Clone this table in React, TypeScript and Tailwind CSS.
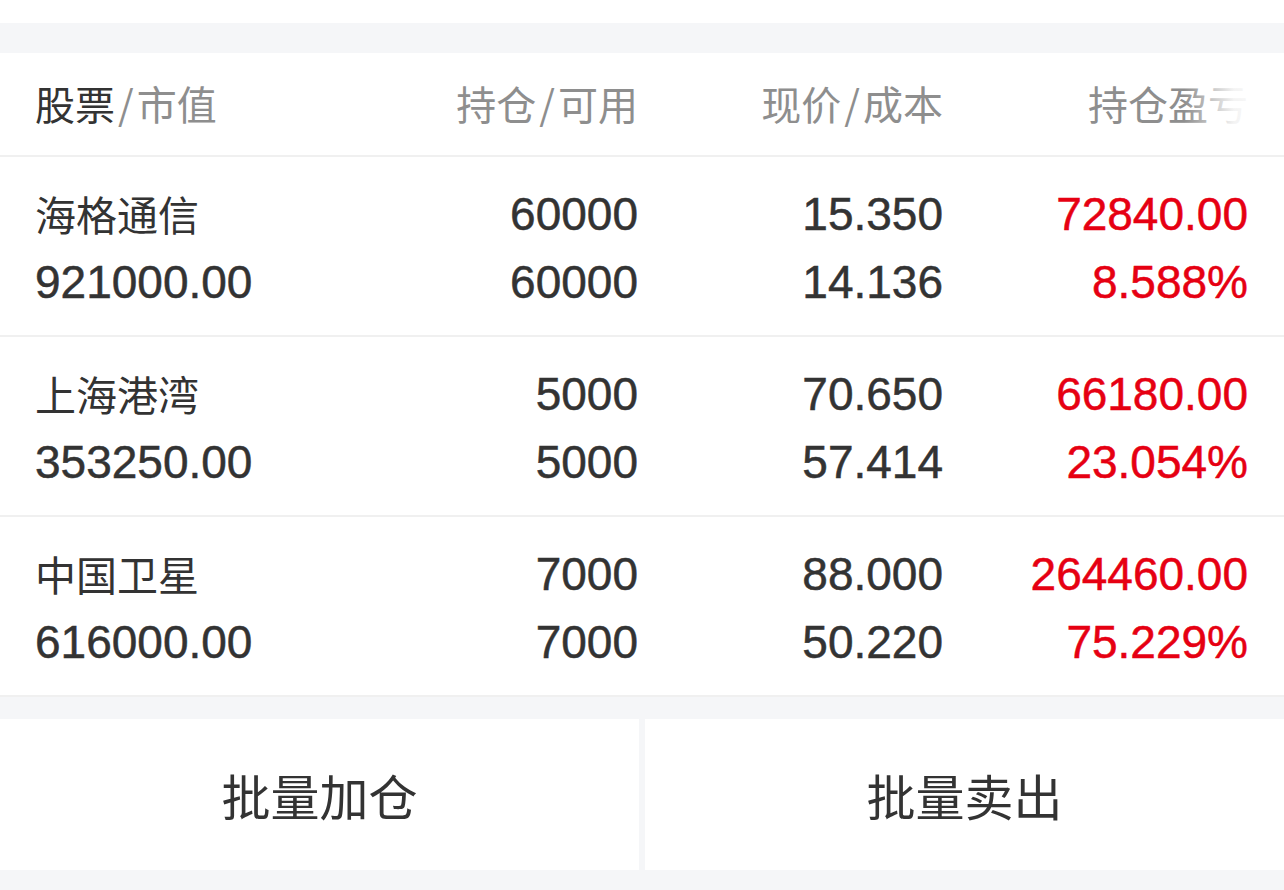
const num = { fontFamily: '"Liberation Sans", Arial, "Noto Sans CJK SC", sans-serif' };
const cjk = { fontFamily: '"Noto Sans CJK SC", "Noto Sans", sans-serif' };

const rows = [
  { name: "海格通信", value: "921000.00", hold: "60000", avail: "60000", price: "15.350", cost: "14.136", pnl: "72840.00", pct: "8.588%" },
  { name: "上海港湾", value: "353250.00", hold: "5000", avail: "5000", price: "70.650", cost: "57.414", pnl: "66180.00", pct: "23.054%" },
  { name: "中国卫星", value: "616000.00", hold: "7000", avail: "7000", price: "88.000", cost: "50.220", pnl: "264460.00", pct: "75.229%" },
];

function HeadCell({ a, b, right }: { a: string; b: string; right?: boolean }) {
  return (
    <div className={right ? "text-right" : "text-left"}>
      <span className={right ? "text-[#8e8e8e]" : "text-[#333333]"}>{a}</span>
      <span className="text-[#8e8e8e] mx-[3px]">/</span>
      <span className="text-[#8e8e8e]">{b}</span>
    </div>
  );
}

export default function App() {
  return (
    <div className="w-[1284px] h-[890px] bg-[#f5f6f8] overflow-hidden" style={cjk}>
      <div className="h-[23px] bg-white" />
      <div className="h-[30px]" />

      {/* table */}
      <div className="bg-white">
        <div className="relative h-[104px] border-b-2 border-[#f0f0f0] grid grid-cols-[1fr_305px_305px_305px] items-center pl-[35px] pr-[36px] pb-[2px] text-[40px] leading-none">
          <HeadCell a="股票" b="市值" />
          <HeadCell a="持仓" b="可用" right />
          <HeadCell a="现价" b="成本" right />
          <div className="text-right text-[#8e8e8e]">持仓盈亏</div>
          <div className="absolute right-0 top-0 h-full w-[100px] bg-gradient-to-r from-white/0 via-white/90 to-white" />
        </div>

        {rows.map((r) => (
          <div
            key={r.name}
            className="h-[180px] border-b-2 border-[#f0f0f0] grid grid-cols-[1fr_305px_305px_305px] pl-[35px] pr-[36px] pt-[23px] text-[#333333]"
          >
            <div className="flex flex-col">
              <div className="h-[68px] flex items-center text-[41px]" style={cjk}>{r.name}</div>
              <div className="h-[68px] flex items-center text-[46px] [-webkit-text-stroke:0.5px_currentColor]" style={num}>{r.value}</div>
            </div>
            <div className="flex flex-col items-end text-[46px] [-webkit-text-stroke:0.5px_currentColor]" style={num}>
              <div className="h-[68px] flex items-center">{r.hold}</div>
              <div className="h-[68px] flex items-center">{r.avail}</div>
            </div>
            <div className="flex flex-col items-end text-[46px] [-webkit-text-stroke:0.5px_currentColor]" style={num}>
              <div className="h-[68px] flex items-center">{r.price}</div>
              <div className="h-[68px] flex items-center">{r.cost}</div>
            </div>
            <div className="flex flex-col items-end text-[46px] text-[#e60012] [-webkit-text-stroke:0.5px_currentColor]" style={num}>
              <div className="h-[68px] flex items-center">{r.pnl}</div>
              <div className="h-[68px] flex items-center">{r.pct}</div>
            </div>
          </div>
        ))}
      </div>

      <div className="h-[22px]" />

      {/* batch buttons */}
      <div className="grid grid-cols-[639px_1fr] gap-[6px] h-[151px]">
        <button className="bg-white flex items-center justify-center text-[49px] text-[#333333]" style={cjk}>
          批量加仓
        </button>
        <button className="bg-white flex items-center justify-center text-[49px] text-[#333333]" style={cjk}>
          批量卖出
        </button>
      </div>
    </div>
  );
}
